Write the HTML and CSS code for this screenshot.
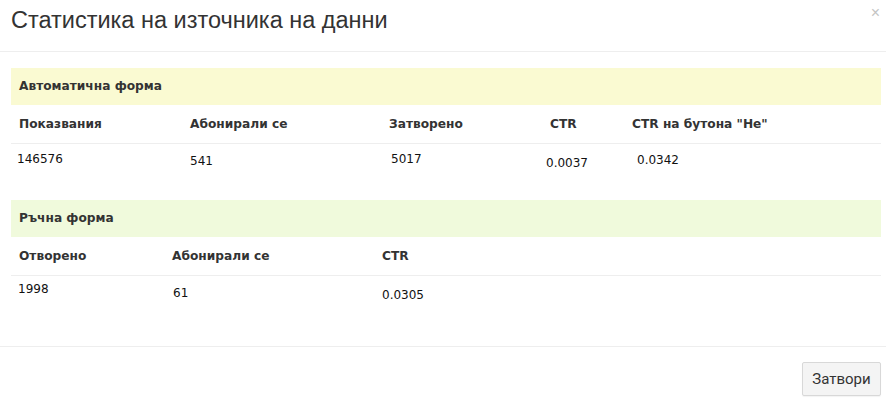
FILE: index.html
```html
<!DOCTYPE html>
<html lang="bg">
<head>
<meta charset="utf-8">
<title>Статистика</title>
<link rel="stylesheet" href="styles.css">
</head>
<body>
<div class="modal">
  <div class="modal-header">
    <h4 class="modal-title">Статистика на източника на данни</h4>
    <span class="close">×</span>
  </div>
  <div class="modal-body">
    <div class="panel panel-auto">
      <div class="panel-heading">Автоматична форма</div>
      <table class="stats stats-auto">
        <thead>
          <tr><th>Показвания</th><th>Абонирали се</th><th>Затворено</th><th class="ctr">CTR</th><th>CTR на бутона "Не"</th></tr>
        </thead>
        <tbody>
          <tr><td class="d1">146576</td><td class="d2">541</td><td class="d3">5017</td><td class="d4">0.0037</td><td class="d5">0.0342</td></tr>
        </tbody>
      </table>
    </div>
    <div class="panel panel-manual">
      <div class="panel-heading">Ръчна форма</div>
      <table class="stats stats-manual">
        <thead>
          <tr><th>Отворено</th><th>Абонирали се</th><th>CTR</th><th></th></tr>
        </thead>
        <tbody>
          <tr><td class="m1">1998</td><td class="m2">61</td><td class="m3">0.0305</td><td></td></tr>
        </tbody>
      </table>
    </div>
  </div>
  <div class="modal-footer">
    <button class="btn" type="button">Затвори</button>
  </div>
</div>
</body>
</html>
```

FILE: styles.css
```css
html, body {
  margin: 0;
  padding: 0;
  background: #fff;
}
body {
  font-family: "DejaVu Sans", Verdana, sans-serif;
  color: #222;
  width: 886px;
  height: 402px;
  overflow: hidden;
}
.modal {
  display: flex;
  flex-direction: column;
  height: 402px;
}
.modal-header {
  position: relative;
  flex: 0 0 52px;
  box-sizing: border-box;
  border-bottom: 1px solid #eeeeee;
  padding: 5px 11px 0;
}
.modal-title {
  margin: 0;
  font-family: "Liberation Sans", Arial, sans-serif;
  font-weight: normal;
  font-size: 23.5px;
  line-height: 30px;
  color: #333;
}
.close {
  position: absolute;
  right: 6px;
  top: 4px;
  font-family: "Liberation Sans", Arial, sans-serif;
  font-size: 16px;
  color: #c4c4c4;
}
.modal-body {
  padding: 16px 5px 0 11px;
  flex: 1 1 auto;
  min-height: 0;
  overflow: hidden;
}
.panel {
  margin-bottom: 20px;
}
.panel:last-child {
  margin-bottom: 0;
}
.panel-heading {
  height: 37px;
  line-height: 37px;
  padding-left: 8px;
  font-weight: bold;
  font-size: 12.2px;
  color: #333;
}
.panel-auto .panel-heading { background: #fafad2; }
.panel-manual .panel-heading { background: #f0fadc; }
.stats {
  width: 100%;
  border-collapse: collapse;
  table-layout: fixed;
}
.stats thead tr { height: 38px; }
.stats tbody tr { height: 37px; }
.stats th {
  text-align: left;
  font-weight: bold;
  font-size: 12.2px;
  color: #333;
  padding: 0 0 0 8px;
  border-bottom: 1px solid #eeeeee;
  vertical-align: middle;
}
.stats td {
  font-size: 12px;
  color: #111;
  padding: 8px 0 0 8px;
  vertical-align: top;
}
.stats-auto th:nth-child(1) { width: 163px; }
.stats-auto th:nth-child(2) { width: 191px; }
.stats-auto th:nth-child(3) { width: 152px; }
.stats-auto th:nth-child(4) { width: 75px; }
.stats-auto th.ctr { padding-left: 9px; width: 74px; }
.stats-manual th:nth-child(1) { width: 145px; }
.stats-manual th:nth-child(2) { width: 202px; }
.stats-manual th:nth-child(3) { width: 142px; }
.d1 { padding-left: 6px !important; padding-top: 8px !important; }
.d2 { padding-top: 10px !important; }
.d3 { padding-left: 10px !important; padding-top: 8px !important; }
.d4 { padding-left: 5px !important; padding-top: 12px !important; }
.d5 { padding-left: 13px !important; padding-top: 9px !important; }
.m1 { padding-left: 7px !important; padding-top: 6px !important; }
.m2 { padding-left: 9px !important; padding-top: 10px !important; }
.m3 { padding-top: 12px !important; }
.modal-footer {
  flex: 0 0 auto;
  border-top: 1px solid #eeeeee;
  display: flex;
  justify-content: flex-end;
  padding: 15px 5px 6px;
}
.btn {
  width: 79px;
  height: 34px;
  border: 1px solid #d8d8d8;
  border-radius: 2px;
  background: #f4f4f4;
  font-family: Roboto, "Liberation Sans", sans-serif;
  font-size: 15px;
  color: #333;
  padding: 0;
  box-shadow: 0 1px 1px rgba(0,0,0,0.05);
}
```
